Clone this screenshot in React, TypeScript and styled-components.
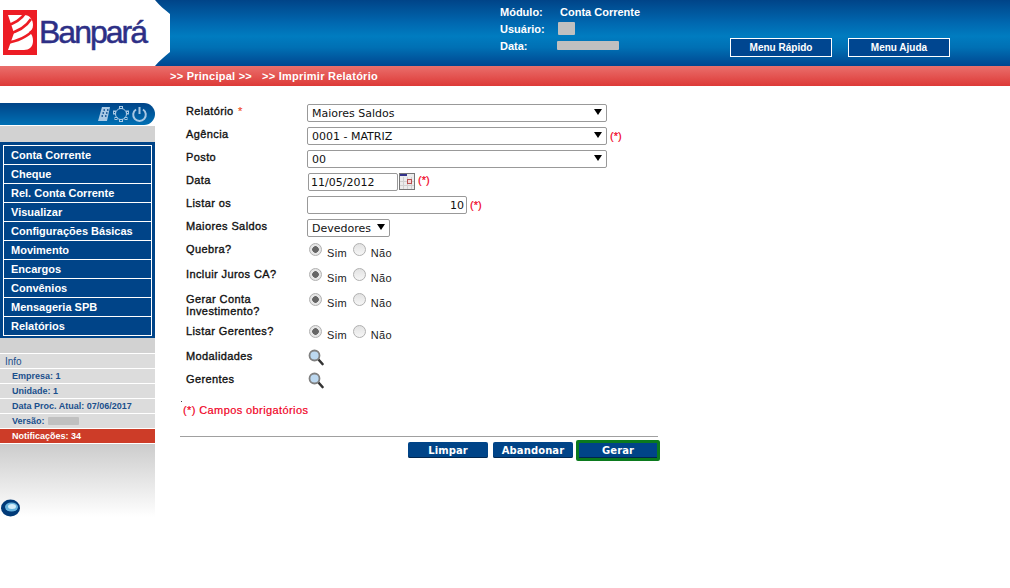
import styled, { createGlobalStyle } from "styled-components"

const GlobalStyle = createGlobalStyle`
  html, body {
    margin: 0;
    padding: 0;
    background: white;
    overflow: hidden;
  }
  body {
    font-family: "Liberation Sans", Arial, sans-serif;
  }
`

const Page = styled.div`
  width: 1010px;
  height: 588px;
`

const Header = styled.header`
  height: 66px;
  display: flex;
  background: linear-gradient(#004488 0%, #0068b0 35%, #007cc0 55%, #0070b4 72%, #004690 100%);
`

const LogoArea = styled.div`
  position: relative;
  width: 172px;
  flex-shrink: 0;
  svg {
    display: block;
  }
`

const BankName = styled.span`
  position: absolute;
  left: 39px;
  top: 14px;
  font-size: 32px;
  letter-spacing: -2px;
  color: #2d2f86;
  -webkit-text-stroke: 0.5px #2d2f86;
`

const InfoBlock = styled.div`
  margin-left: 328px;
  padding-top: 3px;
  width: 230px;
  display: grid;
  grid-template-columns: 60px 1fr;
  grid-auto-rows: 17px;
  align-items: center;
  align-content: start;
  font-size: 11px;
  font-weight: bold;
  color: white;
`

const Blur = styled.span<{ $w: number; $h: number; $shift?: number }>`
  display: block;
  width: ${(p) => p.$w}px;
  height: ${(p) => p.$h}px;
  margin-left: ${(p) => p.$shift ?? 0}px;
  background: #c0c0c0;
  border-radius: 1px;
`

const HeaderButtons = styled.div`
  display: flex;
  gap: 16px;
  padding-top: 38px;
`

const HeaderButton = styled.button`
  width: 102px;
  height: 19px;
  padding: 0;
  border: 1px solid white;
  background: #004690;
  color: white;
  font-family: inherit;
  font-size: 10px;
  font-weight: bold;
`

const CrumbBar = styled.div`
  height: 20px;
  padding-left: 170px;
  display: flex;
  align-items: center;
  gap: 10px;
  background: linear-gradient(#ea6f6c, #dd3a37);
  color: white;
  font-size: 11px;
  font-weight: bold;
  letter-spacing: 0.25px;
`

const Content = styled.div`
  display: flex;
  padding-top: 17px;
`

const Sidebar = styled.aside`
  width: 155px;
  flex-shrink: 0;
`

const SideTop = styled.div`
  height: 22px;
  margin-bottom: 1px;
  padding-right: 7px;
  display: flex;
  justify-content: flex-end;
  align-items: center;
  gap: 1px;
  border-radius: 0 11px 11px 0;
  background: linear-gradient(#004488, #0070b4);
`

const SideGray = styled.div`
  height: 16px;
  background: #d2d2d2;
`

const Menu = styled.nav`
  display: flex;
  flex-direction: column;
  padding: 3px 3px 2px;
  background: #004488;
`

const MenuItem = styled.a`
  height: 19px;
  box-sizing: border-box;
  padding-left: 7px;
  display: flex;
  align-items: center;
  border: 1px solid white;
  border-top-width: 0;
  color: white;
  font-size: 11px;
  font-weight: bold;
  &:first-child {
    height: 20px;
    border-top-width: 1px;
  }
`

const SideGap = styled.div`
  height: 15px;
  background: #d2d2d2;
`

const InfoRow = styled.div<{ $sub?: boolean; $alert?: boolean }>`
  height: 15px;
  box-sizing: border-box;
  padding-left: ${(p) => (p.$sub ? 12 : 5)}px;
  display: flex;
  align-items: center;
  gap: 3px;
  border-top: 1px solid white;
  background: ${(p) => (p.$alert ? "#cd3c28" : "#dcdcdc")};
  color: ${(p) => (p.$alert ? "white" : "#1a4f8c")};
  font-size: ${(p) => (p.$sub ? 9 : 10)}px;
  font-weight: ${(p) => (p.$alert || p.$sub ? "bold" : "normal")};
`

const SideFade = styled.div`
  height: 73px;
  border-top: 1px solid white;
  display: flex;
  align-items: flex-end;
  background: linear-gradient(#cccccc, #ffffff);
`

const Main = styled.main`
  width: 478px;
  margin-left: 25px;
`

const Form = styled.div`
  display: flex;
  flex-direction: column;
  padding-left: 6px;
`

const Row = styled.div<{ $h?: number }>`
  display: grid;
  grid-template-columns: 121px 1fr;
  height: ${(p) => p.$h ?? 23}px;
`

const Label = styled.label`
  font-size: 11px;
  letter-spacing: 0.4px;
  line-height: 12px;
  color: #111;
  padding-top: 2px;
  -webkit-text-stroke: 0.35px #111;
`

const Star = styled.span`
  color: #f05030;
  margin-left: 1px;
  -webkit-text-stroke: 0.2px #f05030;
`

const Control = styled.div`
  display: flex;
  align-items: flex-start;
  gap: 3px;
  padding-top: 1px;
`

const SelectWrap = styled.div<{ $w: number }>`
  position: relative;
  width: ${(p) => p.$w}px;
  height: 18px;
  &::after {
    content: "";
    position: absolute;
    right: 5px;
    top: 5px;
    border-left: 4px solid transparent;
    border-right: 4px solid transparent;
    border-top: 6px solid black;
  }
`

const Select = styled.select`
  appearance: none;
  display: block;
  width: 100%;
  height: 100%;
  box-sizing: border-box;
  padding: 0 0 0 4px;
  border: 1px solid #999;
  border-radius: 2px;
  background: white;
  color: #111;
  font-family: "DejaVu Sans", Verdana, sans-serif;
  font-size: 11px;
`

const TextInput = styled.input<{ $w: number; $right?: boolean; $shift?: number }>`
  width: ${(p) => p.$w}px;
  height: 18px;
  box-sizing: border-box;
  margin-left: ${(p) => p.$shift ?? 0}px;
  padding: 0 2px;
  border: 1px solid #999;
  border-radius: 2px;
  color: #111;
  font-family: "DejaVu Sans", Verdana, sans-serif;
  font-size: 11px;
  text-align: ${(p) => (p.$right ? "right" : "left")};
`

const Required = styled.span<{ $raised?: boolean }>`
  color: #f0001e;
  font-size: 11px;
  line-height: 18px;
  margin-top: ${(p) => (p.$raised ? -2 : 0)}px;
  -webkit-text-stroke: 0.2px #f0001e;
`

const CalendarButton = styled.span`
  display: block;
  margin-left: -2px;
  height: 17px;
`

const RadioGroup = styled.div`
  display: flex;
  align-items: flex-start;
  gap: 5px;
  padding: 2px 0 0 2px;
`

const RadioLabel = styled.span`
  font-size: 11px;
  color: #222;
  padding-top: 4px;
  letter-spacing: 0.3px;
  margin-right: 1px;
`

const Radio = styled.input.attrs({ type: "radio" })`
  appearance: none;
  margin: 0;
  width: 13px;
  height: 13px;
  border: 1px solid #b0b0b0;
  border-radius: 50%;
  background: linear-gradient(#e2e2e2, #f6f6f6);
  &:checked {
    background: radial-gradient(circle, #666 0 3px, #e6e6e6 3.6px);
  }
`

const LensButton = styled.span`
  display: block;
  margin-left: 1px;
`

const StrayDot = styled.div`
  width: 1px;
  height: 1px;
  margin: 7px 0 0 1px;
  background: #444;
`

const RequiredNote = styled.p`
  margin: 2px 0 0 3px;
  color: #f0001e;
  font-size: 11px;
  letter-spacing: 0.4px;
  -webkit-text-stroke: 0.2px #f0001e;
`

const Actions = styled.div`
  margin-top: 20px;
  padding-top: 3px;
  border-top: 1px solid #a0a0a0;
  display: flex;
  justify-content: flex-end;
  gap: 5px;
`

const ActionButton = styled.button<{ $active?: boolean }>`
  box-sizing: border-box;
  width: ${(p) => (p.$active ? 84 : 80)}px;
  height: ${(p) => (p.$active ? 21 : 16)}px;
  margin: ${(p) => (p.$active ? "0 -2px 0 -2px" : "2px 0 0")};
  padding: 0;
  border: ${(p) => (p.$active ? "3px solid #0b7a1e" : "0")};
  border-radius: 2px;
  background: #004488;
  box-shadow: inset 0 -1px 0 #00264f;
  color: white;
  font-family: "DejaVu Sans", Verdana, sans-serif;
  font-size: 10px;
  font-weight: bold;
  letter-spacing: 0.1px;
`

function Logo() {
  return (
    <svg width="172" height="66" viewBox="0 0 172 66">
      <path d="M0 0H155C159 5 165 10 170 14V52C165 56 159 61 155 66H0Z" fill="white" />
      <rect x="3" y="10" width="34" height="45" fill="#ed1c24" />
      <path
        d="M8 15H24C30 15 33 20 33 25C33 29 31 31 29 32C32 34 33 37 33 41C33 47 29 50 24 50H8L14 33Z"
        fill="white"
      />
      <g fill="none" stroke="#ed1c24" strokeWidth="2.6">
        <path d="M5 26C14 24 21 20 26 12" />
        <path d="M7 34C17 32 26 27 31 19" />
        <path d="M5 43C17 42 29 36 35 28" />
      </g>
    </svg>
  )
}

function Magnifier() {
  return (
    <svg width="16" height="17" viewBox="0 0 16 17">
      <line x1="10" y1="10" x2="14.500" y2="15" stroke="#333" strokeWidth="2.6" strokeLinecap="round" />
      <circle cx="6.500" cy="6.500" r="5" fill="#bcd8f0" stroke="#808080" strokeWidth="1.8" />
    </svg>
  )
}

function CalendarIcon() {
  return (
    <svg width="16" height="17" viewBox="0 0 16 17">
      <rect x="0.500" y="0.500" width="15" height="16" fill="#ececec" stroke="#777" />
      <rect x="1" y="1" width="7" height="2" fill="#33338a" />
      <path d="M4.500 4V16M8.500 4V16M12.500 4V16M1 8.500H15M1 12.500H15" stroke="#d0d0d0" />
      <rect x="8.500" y="6.500" width="4" height="4" fill="#f4d8d8" stroke="#b85050" />
    </svg>
  )
}

function SideIcons() {
  return (
    <>
      <svg width="14" height="16" viewBox="0 0 14 16">
        <path d="M5 1H13L10 15H1Z" fill="#a8c8e4" />
        <path d="M6.500 4H8M10 4H11.500M5.500 7H7M9 7H10.500M4.500 10H6M8 10H9.500" stroke="#004488" strokeWidth="1.500" />
      </svg>
      <svg width="18" height="18" viewBox="0 0 18 18" fill="none" stroke="#a8c8e4">
        <circle cx="9" cy="9" r="5.500" />
        <rect x="7.500" y="1.500" width="3" height="2" />
        <rect x="7.500" y="14.500" width="3" height="2" />
        <rect x="1.500" y="6" width="2" height="3" />
        <rect x="14.500" y="6" width="2" height="3" />
        <rect x="3" y="12.500" width="2" height="2" />
        <rect x="13" y="12.500" width="2" height="2" />
      </svg>
      <svg width="17" height="17" viewBox="0 0 17 17" fill="none" stroke="#a8c8e4" strokeWidth="2">
        <path d="M5 3.500A6.300 6.300 0 1 0 12 3.500" />
        <path d="M8.500 1V8" />
      </svg>
    </>
  )
}

function Orb() {
  return (
    <svg width="21" height="18" viewBox="0 0 21 18">
      <ellipse cx="10.500" cy="9" rx="9.500" ry="8.500" fill="#003a78" />
      <ellipse cx="11.500" cy="8" rx="6.500" ry="4.500" fill="#68b4de" />
      <ellipse cx="12" cy="7.500" rx="4" ry="2.500" fill="#d4eefa" />
    </svg>
  )
}

const menuItems = [
  "Conta Corrente",
  "Cheque",
  "Rel. Conta Corrente",
  "Visualizar",
  "Configurações Básicas",
  "Movimento",
  "Encargos",
  "Convênios",
  "Mensageria SPB",
  "Relatórios",
]

const radioRows = [
  { name: "quebra", label: "Quebra?", h: 25 },
  { name: "juros", label: "Incluir Juros CA?", h: 25 },
  { name: "invest", label: "Gerar Conta Investimento?", h: 32 },
  { name: "gerentes", label: "Listar Gerentes?", h: 25 },
]

export default function App() {
  return (
    <Page>
      <GlobalStyle />
      <Header>
        <LogoArea>
          <Logo />
          <BankName>Banpará</BankName>
        </LogoArea>
        <InfoBlock>
          <span>Módulo:</span>
          <span>Conta Corrente</span>
          <span>Usuário:</span>
          <Blur $w={17} $h={13} $shift={-2} />
          <span>Data:</span>
          <Blur $w={62} $h={9} $shift={-3} />
        </InfoBlock>
        <HeaderButtons>
          <HeaderButton>Menu Rápido</HeaderButton>
          <HeaderButton>Menu Ajuda</HeaderButton>
        </HeaderButtons>
      </Header>
      <CrumbBar>
        <span>&gt;&gt; Principal &gt;&gt;</span>
        <span>&gt;&gt; Imprimir Relatório</span>
      </CrumbBar>
      <Content>
        <Sidebar>
          <SideTop>
            <SideIcons />
          </SideTop>
          <SideGray />
          <Menu>
            {menuItems.map((item) => (
              <MenuItem key={item}>{item}</MenuItem>
            ))}
          </Menu>
          <SideGap />
          <InfoRow>Info</InfoRow>
          <InfoRow $sub>Empresa: 1</InfoRow>
          <InfoRow $sub>Unidade: 1</InfoRow>
          <InfoRow $sub>Data Proc. Atual: 07/06/2017</InfoRow>
          <InfoRow $sub>
            Versão: <Blur $w={31} $h={8} />
          </InfoRow>
          <InfoRow $sub $alert>
            Notificações: 34
          </InfoRow>
          <SideFade>
            <Orb />
          </SideFade>
        </Sidebar>
        <Main>
          <Form>
            <Row>
              <Label>
                Relatório <Star>*</Star>
              </Label>
              <Control>
                <SelectWrap $w={300}>
                  <Select>
                    <option>Maiores Saldos</option>
                  </Select>
                </SelectWrap>
              </Control>
            </Row>
            <Row>
              <Label>Agência</Label>
              <Control>
                <SelectWrap $w={300}>
                  <Select>
                    <option>0001 - MATRIZ</option>
                  </Select>
                </SelectWrap>
                <Required>(*)</Required>
              </Control>
            </Row>
            <Row>
              <Label>Posto</Label>
              <Control>
                <SelectWrap $w={300}>
                  <Select>
                    <option>00</option>
                  </Select>
                </SelectWrap>
              </Control>
            </Row>
            <Row>
              <Label>Data</Label>
              <Control>
                <TextInput $w={90} $shift={1} defaultValue="11/05/2012" />
                <CalendarButton>
                  <CalendarIcon />
                </CalendarButton>
                <Required $raised>(*)</Required>
              </Control>
            </Row>
            <Row>
              <Label>Listar os</Label>
              <Control>
                <TextInput $w={160} $right defaultValue="10" />
                <Required>(*)</Required>
              </Control>
            </Row>
            <Row>
              <Label>Maiores Saldos</Label>
              <Control>
                <SelectWrap $w={83}>
                  <Select>
                    <option>Devedores</option>
                  </Select>
                </SelectWrap>
              </Control>
            </Row>
            {radioRows.map((row) => (
              <Row key={row.name} $h={row.h}>
                <Label>{row.label}</Label>
                <RadioGroup>
                  <Radio name={row.name} defaultChecked />
                  <RadioLabel>Sim</RadioLabel>
                  <Radio name={row.name} />
                  <RadioLabel>Não</RadioLabel>
                </RadioGroup>
              </Row>
            ))}
            <Row>
              <Label>Modalidades</Label>
              <Control>
                <LensButton>
                  <Magnifier />
                </LensButton>
              </Control>
            </Row>
            <Row>
              <Label>Gerentes</Label>
              <Control>
                <LensButton>
                  <Magnifier />
                </LensButton>
              </Control>
            </Row>
          </Form>
          <StrayDot />
          <RequiredNote>(*) Campos obrigatórios</RequiredNote>
          <Actions>
            <ActionButton>Limpar</ActionButton>
            <ActionButton>Abandonar</ActionButton>
            <ActionButton $active>Gerar</ActionButton>
          </Actions>
        </Main>
      </Content>
    </Page>
  )
}
